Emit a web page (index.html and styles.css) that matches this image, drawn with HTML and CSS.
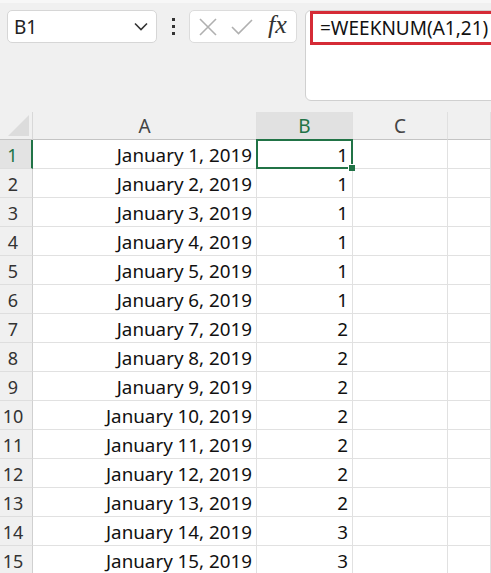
FILE: index.html
```html
<!DOCTYPE html>
<html lang="en">
<head>
  <meta charset="UTF-8">
  <meta name="viewport" content="width=device-width, initial-scale=1.0">
  <title>WEEKNUM</title>
  <link rel="stylesheet" href="styles.css">
</head>
<body>
  <div class="toolbar">
    <div class="name-box">
      <span class="name-text">B1</span>
      <svg class="chevron" width="14" height="9" viewBox="0 0 14 9"><path d="M1 1.5 L7 7.5 L13 1.5" fill="none" stroke="#333" stroke-width="1.6"/></svg>
    </div>
    <div class="dots">
      <span></span><span></span><span></span>
    </div>
    <div class="fx-buttons">
      <svg width="18" height="18" viewBox="0 0 18 18"><path d="M1 1 L17 17 M17 1 L1 17" stroke="#b0b0b0" stroke-width="1.6" fill="none"/></svg>
      <svg width="22" height="16" viewBox="0 0 22 16"><path d="M1 8 L7.5 14.5 L21 1" stroke="#b0b0b0" stroke-width="1.6" fill="none"/></svg>
      <span class="fx">fx</span>
    </div>
    <div class="formula-bar">
      <div class="formula-text">=WEEKNUM(A1,21)</div>
    </div>
  </div>

  <div class="sheet">
    <div class="corner"><div class="corner-tri"></div></div>
    <div class="col-head">A</div>
    <div class="col-head active">B</div>
    <div class="col-head">C</div>
    <div class="col-head"></div>
  </div>
  <div id="rows"></div>

  <script>
    // Build the rows: date in A, week number in B
    const weeks = [1, 1, 1, 1, 1, 1, 2, 2, 2, 2, 2, 2, 2, 3, 3];
    const rows = document.getElementById('rows');
    weeks.forEach((w, i) => {
      const row = document.createElement('div');
      row.className = 'sheet' + (i === 0 ? ' first' : '');
      row.innerHTML =
        `<div class="row-head">${i + 1}</div>` +
        `<div class="cell">January ${i + 1}, 2019</div>` +
        `<div class="cell">${w}</div>` +
        `<div class="cell"></div>` +
        `<div class="cell"></div>`;
      rows.appendChild(row);
    });
  </script>
</body>
</html>
```

FILE: styles.css
```css
body {
  margin: 0;
  background-color: #f0f0f0;
  font-family: "Noto Sans", "Open Sans", sans-serif;
  color: #222;
  overflow: hidden;
}

.toolbar {
  display: flex;
  align-items: flex-start;
  height: 112px;
  padding: 10px 0 0 7px;
  box-sizing: border-box;
  border-top: 3px solid #f7f7f7;
}

.name-box {
  width: 150px;
  height: 33px;
  box-sizing: border-box;
  background: #fff;
  border: 1px solid #d6d6d6;
  border-radius: 5px;
  display: flex;
  align-items: center;
  justify-content: space-between;
  padding: 0 8px 0 6px;
  margin-top: -3px;
}

.name-text {
  font-size: 19px;
  color: #222;
}

.dots {
  width: 32px;
  height: 33px;
  margin-top: -3px;
  display: flex;
  flex-direction: column;
  align-items: center;
  justify-content: center;
  gap: 4px;
}

.dots span {
  width: 3px;
  height: 3px;
  background: #333;
}

.fx-buttons {
  width: 108px;
  height: 33px;
  margin-top: -3px;
  box-sizing: border-box;
  background: #fff;
  border: 1px solid #dcdcdc;
  border-radius: 5px;
  display: flex;
  align-items: center;
  padding: 0 6px 0 9px;
  gap: 14px;
}

.fx {
  font-family: "Liberation Serif", serif;
  font-style: italic;
  font-size: 26px;
  color: #333;
  margin-left: 1px;
  margin-top: -4px;
}

.formula-bar {
  flex: 1;
  height: 91px;
  margin: -3px -10px 0 8px;
  box-sizing: border-box;
  background: #fff;
  border: 1px solid #d0d0d0;
  border-radius: 6px;
  padding: 0 0 0 4px;
}

.formula-text {
  border: 3px solid #d52b36;
  border-right: none;
  height: 34px;
  box-sizing: border-box;
  padding-left: 7px;
  font-size: 19px;
  line-height: 28px;
  color: #111;
  white-space: nowrap;
}

.sheet {
  display: grid;
  grid-template-columns: 33px 224px 96px 95px 1fr;
}

.corner {
  height: 28px;
  border-right: 1px solid #d8d8d8;
  border-bottom: 1px solid #c4c4c4;
  box-sizing: border-box;
  position: relative;
}

.corner-tri {
  position: absolute;
  right: 3px;
  bottom: 3px;
  width: 0;
  height: 0;
  border-left: 21px solid transparent;
  border-bottom: 21px solid #dcdcdc;
}

.col-head {
  height: 28px;
  box-sizing: border-box;
  border-bottom: 1px solid #c4c4c4;
  border-right: 1px solid #e0e0e0;
  text-align: center;
  font-size: 19px;
  line-height: 28px;
  color: #444;
}

.col-head.active {
  background: #e1e1e1;
  color: #217346;
}

.row-head {
  height: 29px;
  box-sizing: border-box;
  border-bottom: 1px solid #dedede;
  border-right: 1px solid #d0d0d0;
  padding-right: 6px;
  text-align: center;
  font-size: 18px;
  line-height: 30px;
  color: #333;
}

.cell {
  height: 29px;
  box-sizing: border-box;
  background: #fff;
  border-bottom: 1px solid #e1e1e1;
  border-right: 1px solid #e1e1e1;
  text-align: right;
  padding-right: 4px;
  font-size: 18.8px;
  line-height: 30px;
  color: #111;
  white-space: nowrap;
}

.sheet.first .row-head {
  background: #e3e3e3;
  color: #217346;
  border-right: 2px solid #217346;
}

.sheet.first .cell:nth-child(3) {
  position: relative;
  overflow: visible;
}

.sheet.first .cell:nth-child(3)::after {
  content: "";
  position: absolute;
  left: -1px;
  top: -1px;
  right: -1px;
  bottom: -1px;
  border: 2px solid #217346;
}

.sheet.first .cell:nth-child(3)::before {
  content: "";
  position: absolute;
  right: -3px;
  bottom: -3px;
  width: 6px;
  height: 6px;
  background: #217346;
  border-left: 1px solid #fff;
  border-top: 1px solid #fff;
  z-index: 1;
}
```
